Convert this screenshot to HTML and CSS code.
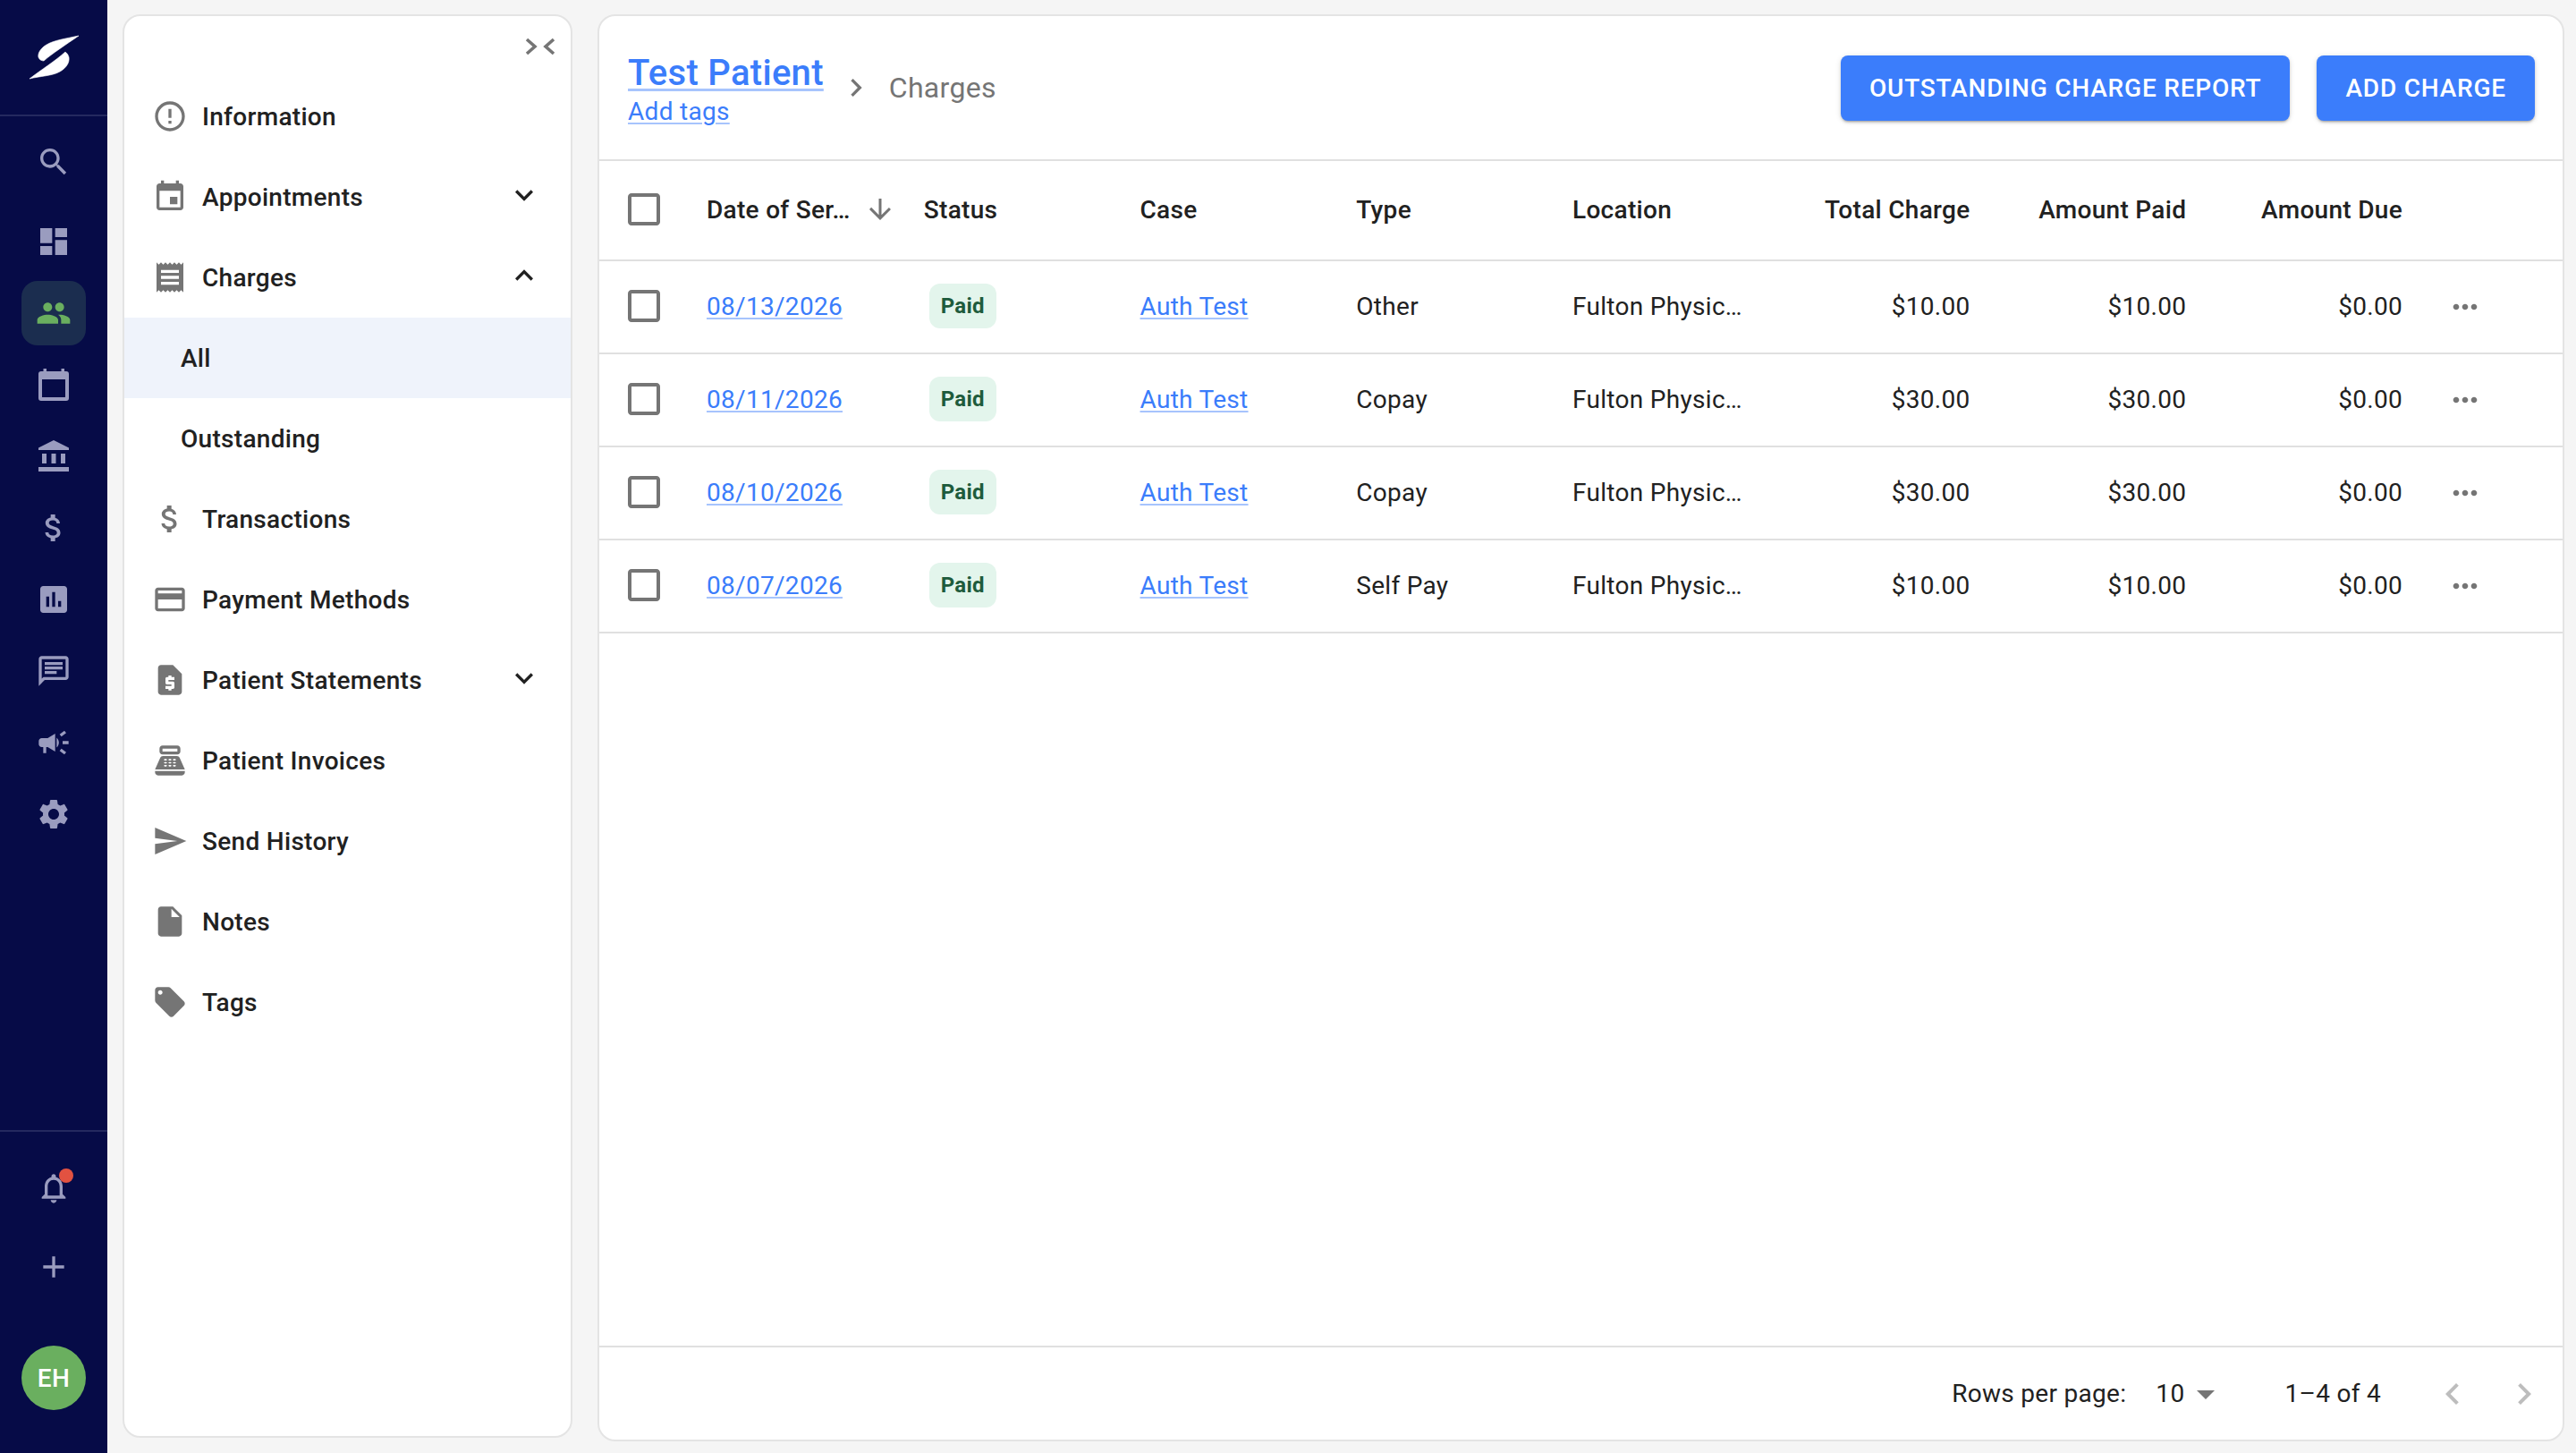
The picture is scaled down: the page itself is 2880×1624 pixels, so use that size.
FILE: index.html
```html
<!DOCTYPE html>
<html lang="en">
<head>
<meta charset="utf-8">
<title>Charges</title>
<link rel="stylesheet" href="styles.css">
</head>
<body>
<svg class="defs" aria-hidden="true">
  <symbol id="i-checkbox" viewBox="0 0 24 24"><path d="M19 5v14H5V5h14m0-2H5c-1.1 0-2 .9-2 2v14c0 1.1.9 2 2 2h14c1.1 0 2-.9 2-2V5c0-1.1-.9-2-2-2z"/></symbol>
  <symbol id="i-more" viewBox="0 0 24 24"><path d="M6 10c-1.1 0-2 .9-2 2s.9 2 2 2 2-.9 2-2-.9-2-2-2zm12 0c-1.1 0-2 .9-2 2s.9 2 2 2 2-.9 2-2-.9-2-2-2zm-6 0c-1.1 0-2 .9-2 2s.9 2 2 2 2-.9 2-2-.9-2-2-2z"/></symbol>
  <symbol id="i-expand" viewBox="0 0 24 24"><path d="M16.59 8.59L12 13.17 7.41 8.59 6 10l6 6 6-6z"/></symbol>
  <symbol id="i-less" viewBox="0 0 24 24"><path d="M12 8l-6 6 1.41 1.41L12 10.83l4.59 4.58L18 14z"/></symbol>
  <symbol id="i-right" viewBox="0 0 24 24"><path d="M10 6L8.59 7.41 13.17 12l-4.58 4.59L10 18l6-6z"/></symbol>
  <symbol id="i-left" viewBox="0 0 24 24"><path d="M15.41 7.41L14 6l-6 6 6 6 1.41-1.41L10.83 12z"/></symbol>
</svg>

<aside class="rail">
  <div class="rail-logo">
    <svg class="logo" viewBox="30 36 60 54"><path d="M88 40C74 43 60 45 52 50C45 54 42 60 43 64C44 67 47 68 49 68C58 60 75 49 88 40Z"/><path d="M33 88C45 85 58 85 67 80C74 76 78 70 77 64C76 60 74 59 73 58C62 68 46 78 33 88Z"/></svg>
  </div>
  <nav class="rail-nav">
    <a class="rail-item search"><svg class="icon40" viewBox="0 0 24 24"><path d="M15.5 14h-.79l-.28-.27C15.41 12.59 16 11.11 16 9.5 16 5.91 13.09 3 9.5 3S3 5.91 3 9.5 5.91 16 9.5 16c1.61 0 3.09-.59 4.23-1.57l.27.28v.79l5 4.99L20.49 19l-4.99-5zm-6 0C7.01 14 5 11.99 5 9.5S7.01 5 9.5 5 14 7.01 14 9.5 11.99 14 9.5 14z"/></svg></a>
    <a class="rail-item"><svg class="icon40" viewBox="0 0 24 24"><path d="M3 13h8V3H3v10zm0 8h8v-6H3v6zm10 0h8V11h-8v10zm0-18v6h8V3h-8z"/></svg></a>
    <a class="rail-item active"><span class="rail-active"><svg class="icon40" viewBox="0 0 24 24"><path d="M16 11c1.66 0 2.99-1.34 2.99-3S17.66 5 16 5c-1.66 0-3 1.34-3 3s1.34 3 3 3zm-8 0c1.66 0 2.99-1.34 2.99-3S9.66 5 8 5C6.34 5 5 6.34 5 8s1.34 3 3 3zm0 2c-2.33 0-7 1.17-7 3.5V19h14v-2.5c0-2.33-4.67-3.5-7-3.5zm8 0c-.29 0-.62.02-.97.05 1.16.84 1.97 1.97 1.97 3.45V19h6v-2.5c0-2.33-4.67-3.5-7-3.5z"/></svg></span></a>
    <a class="rail-item"><svg class="icon40" viewBox="0 0 40 40"><path fill-rule="evenodd" d="M6 5h2.500V2H12V5H28.500V2H32V5H34a3 3 0 0 1 3 3V35a3 3 0 0 1-3 3H6a3 3 0 0 1-3-3V8a3 3 0 0 1 3-3zM7 14V34H33V14z"/></svg></a>
    <a class="rail-item"><svg class="icon40" viewBox="0 0 40 40"><path d="M20 2L37 10.500V13H3V10.500zM7 17h5V28H7zM17.500 17h5V28h-5zM28 17h5V28h-5zM3 32H37v5H3z"/></svg></a>
    <a class="rail-item"><svg class="icon40" viewBox="0 0 24 24"><path d="M11.8 10.9c-2.27-.59-3-1.2-3-2.15 0-1.09 1.01-1.85 2.7-1.85 1.78 0 2.44.85 2.5 2.1h2.21c-.07-1.72-1.12-3.3-3.21-3.81V3h-3v2.16c-1.94.42-3.5 1.68-3.5 3.61 0 2.31 1.91 3.46 4.7 4.13 2.5.6 3 1.48 3 2.41 0 .69-.49 1.79-2.7 1.79-2.06 0-2.87-.92-2.98-2.1h-2.2c.12 2.19 1.76 3.42 3.68 3.83V21h3v-2.15c1.95-.37 3.5-1.5 3.5-3.55 0-2.84-2.43-3.81-4.7-4.4z"/></svg></a>
    <a class="rail-item"><svg class="icon40" viewBox="0 0 24 24"><path d="M19 3H5c-1.1 0-2 .9-2 2v14c0 1.1.9 2 2 2h14c1.1 0 2-.9 2-2V5c0-1.1-.9-2-2-2zM9 17H7v-7h2v7zm4 0h-2V7h2v10zm4 0h-2v-4h2v4z"/></svg></a>
    <a class="rail-item"><svg class="icon40" viewBox="0 0 24 24"><path d="M20 2H4c-1.1 0-1.99.9-1.99 2L2 22l4-4h14c1.1 0 2-.9 2-2V4c0-1.1-.9-2-2-2zm0 14H5.17L4 17.17V4h16v12zM6 12h8v2H6zm0-3h12v2H6zm0-3h12v2H6z"/></svg></a>
    <a class="rail-item"><svg class="icon40" viewBox="0 0 24 24"><path d="M18 11v2h4v-2h-4zm-2 6.61c.96.71 2.21 1.65 3.2 2.39.4-.53.8-1.07 1.2-1.6-.99-.74-2.24-1.68-3.2-2.4-.4.54-.8 1.08-1.2 1.61zM20.4 5.6c-.4-.53-.8-1.07-1.2-1.6-.99.74-2.24 1.68-3.2 2.4.4.53.8 1.07 1.2 1.6.96-.72 2.21-1.65 3.2-2.4zM4 9c-1.1 0-2 .9-2 2v2c0 1.1.9 2 2 2h1v4h2v-4h1l5 3V6L8 9H4zm11.5 3c0-1.33-.58-2.53-1.5-3.35v6.69c.92-.81 1.5-2.01 1.5-3.34z"/></svg></a>
    <a class="rail-item"><svg class="icon40" viewBox="0 0 24 24"><path d="M19.14 12.94c.04-.3.06-.61.06-.94 0-.32-.02-.64-.07-.94l2.03-1.58c.18-.14.23-.41.12-.61l-1.92-3.32c-.12-.22-.37-.29-.59-.22l-2.39.96c-.5-.38-1.03-.7-1.62-.94l-.36-2.54c-.04-.24-.24-.41-.48-.41h-3.84c-.24 0-.43.17-.47.41l-.36 2.54c-.59.24-1.13.57-1.62.94l-2.39-.96c-.22-.08-.47 0-.59.22L2.74 8.87c-.12.21-.08.47.12.61l2.03 1.58c-.05.3-.09.63-.09.94s.02.64.07.94l-2.03 1.58c-.18.14-.23.41-.12.61l1.92 3.32c.12.22.37.29.59.22l2.39-.96c.5.38 1.03.7 1.62.94l.36 2.54c.05.24.24.41.48.41h3.84c.24 0 .44-.17.47-.41l.36-2.54c.59-.24 1.13-.56 1.62-.94l2.39.96c.22.08.47 0 .59-.22l1.92-3.32c.12-.22.07-.47-.12-.61l-2.01-1.58zM12 15.6c-1.98 0-3.6-1.62-3.6-3.6s1.62-3.6 3.6-3.6 3.6 1.62 3.6 3.6-1.62 3.6-3.6 3.6z"/></svg></a>
  </nav>
  <div class="rail-foot">
    <a class="rail-foot-item bell"><svg class="icon40" viewBox="0 0 24 24"><path d="M12 22c1.1 0 2-.9 2-2h-4c0 1.1.9 2 2 2zm6-6v-5c0-3.07-1.63-5.64-4.5-6.32V4c0-.83-.67-1.5-1.5-1.5s-1.5.67-1.5 1.5v.68C7.64 5.36 6 7.92 6 11v5l-2 2v1h16v-1l-2-2zm-2 1H8v-6c0-2.48 1.51-4.5 4-4.5s4 2.02 4 4.5v6z"/></svg><span class="dot"></span></a>
    <a class="rail-foot-item"><svg class="icon40" viewBox="0 0 24 24"><path d="M19 13h-6v6h-2v-6H5v-2h6V5h2v6h6v2z"/></svg></a>
    <div class="avatar">EH</div>
  </div>
</aside>

<aside class="panel">
  <div class="panel-top">
    <svg class="collapse" viewBox="0 0 36 24"><polyline points="3,4 12,12 3,20"/><polyline points="33,4 24,12 33,20"/></svg>
  </div>
  <a class="pitem"><svg class="icon40 gray" viewBox="0 0 24 24"><path d="M11 15h2v2h-2zm0-8h2v6h-2zm.99-5C6.47 2 2 6.48 2 12s4.47 10 9.99 10C17.52 22 22 17.52 22 12S17.52 2 11.99 2zM12 20c-4.42 0-8-3.58-8-8s3.58-8 8-8 8 3.58 8 8-3.58 8-8 8z"/></svg><span class="plabel">Information</span></a>
  <a class="pitem"><svg class="icon40 gray" viewBox="0 0 24 24"><path d="M17 12h-5v5h5v-5zM16 1v2H8V1H6v2H5c-1.11 0-1.99.9-1.99 2L3 19c0 1.1.89 2 2 2h14c1.1 0 2-.9 2-2V5c0-1.1-.9-2-2-2h-1V1h-2zm3 18H5V8h14v11z"/></svg><span class="plabel">Appointments</span><svg class="caret"><use href="#i-expand"/></svg></a>
  <a class="pitem"><svg class="icon40 gray" viewBox="0 0 24 24"><path d="M18 17H6v-2h12v2zm0-4H6v-2h12v2zm0-4H6V7h12v2zM3 22l1.5-1.5L6 22l1.5-1.5L9 22l1.5-1.5L12 22l1.5-1.5L15 22l1.5-1.5L18 22l1.5-1.5L21 22V2l-1.5 1.5L18 2l-1.5 1.5L15 2l-1.5 1.5L12 2l-1.5 1.5L9 2 7.5 3.5 6 2 4.5 3.5 3 2v20z"/></svg><span class="plabel">Charges</span><svg class="caret"><use href="#i-less"/></svg></a>
  <a class="pitem sub selected"><span class="plabel">All</span></a>
  <a class="pitem sub"><span class="plabel">Outstanding</span></a>
  <a class="pitem"><svg class="icon40 gray" viewBox="0 0 24 24"><path d="M11.8 10.9c-2.27-.59-3-1.2-3-2.15 0-1.09 1.01-1.85 2.7-1.85 1.78 0 2.44.85 2.5 2.1h2.21c-.07-1.72-1.12-3.3-3.21-3.81V3h-3v2.16c-1.94.42-3.5 1.68-3.5 3.61 0 2.31 1.91 3.46 4.7 4.13 2.5.6 3 1.48 3 2.41 0 .69-.49 1.79-2.7 1.79-2.06 0-2.87-.92-2.98-2.1h-2.2c.12 2.19 1.76 3.42 3.68 3.83V21h3v-2.15c1.95-.37 3.5-1.5 3.5-3.55 0-2.84-2.43-3.81-4.7-4.4z"/></svg><span class="plabel">Transactions</span></a>
  <a class="pitem"><svg class="icon40 gray" viewBox="0 0 24 24"><path d="M20 4H4c-1.11 0-1.99.89-1.99 2L2 18c0 1.11.89 2 2 2h16c1.11 0 2-.89 2-2V6c0-1.11-.89-2-2-2zm0 14H4v-6h16v6zm0-10H4V6h16v2z"/></svg><span class="plabel">Payment Methods</span></a>
  <a class="pitem"><svg class="icon40 gray" viewBox="0 0 24 24"><path d="M14 2H6c-1.1 0-1.99.9-1.99 2L4 20c0 1.1.89 2 1.99 2H18c1.1 0 2-.9 2-2V8l-6-6zm1 10h-4v1h3c.55 0 1 .45 1 1v3c0 .55-.45 1-1 1h-1v1h-2v-1H9v-2h4v-1h-3c-.55 0-1-.45-1-1v-3c0-.55.45-1 1-1h1V9h2v1h2v2z"/></svg><span class="plabel">Patient Statements</span><svg class="caret"><use href="#i-expand"/></svg></a>
  <a class="pitem"><svg class="icon40 gray" viewBox="0 0 24 24"><path d="M17 2H7c-1.1 0-2 .9-2 2v2c0 1.1.9 2 2 2h10c1.1 0 2-.9 2-2V4c0-1.1-.9-2-2-2zm0 4H7V4h10v2zm3 16H4c-1.1 0-2-.9-2-2v-1h20v1c0 1.1-.9 2-2 2zm-1.47-11.81C18.21 9.47 17.49 9 16.7 9H7.3c-.79 0-1.51.47-1.83 1.19L2 18h20l-3.47-7.81zM9.5 16h-1c-.28 0-.5-.22-.5-.5s.22-.5.5-.5h1c.28 0 .5.22.5.5s-.22.5-.5.5zm0-2h-1c-.28 0-.5-.22-.5-.5s.22-.5.5-.5h1c.28 0 .5.22.5.5s-.22.5-.5.5zm0-2h-1c-.28 0-.5-.22-.5-.5s.22-.5.5-.5h1c.28 0 .5.22.5.5s-.22.5-.5.5zm3 4h-1c-.28 0-.5-.22-.5-.5s.22-.5.5-.5h1c.28 0 .5.22.5.5s-.22.5-.5.5zm0-2h-1c-.28 0-.5-.22-.5-.5s.22-.5.5-.5h1c.28 0 .5.22.5.5s-.22.5-.5.5zm0-2h-1c-.28 0-.5-.22-.5-.5s.22-.5.5-.5h1c.28 0 .5.22.5.5s-.22.5-.5.5zm3 4h-1c-.28 0-.5-.22-.5-.5s.22-.5.5-.5h1c.28 0 .5.22.5.5s-.22.5-.5.5zm0-2h-1c-.28 0-.5-.22-.5-.5s.22-.5.5-.5h1c.28 0 .5.22.5.5s-.22.5-.5.5zm0-2h-1c-.28 0-.5-.22-.5-.5s.22-.5.5-.5h1c.28 0 .5.22.5.5s-.22.5-.5.5z"/></svg><span class="plabel">Patient Invoices</span></a>
  <a class="pitem"><svg class="icon40 gray" viewBox="0 0 24 24"><path d="M2.01 21L23 12 2.01 3 2 10l15 2-15 2z"/></svg><span class="plabel">Send History</span></a>
  <a class="pitem"><svg class="icon40 gray" viewBox="0 0 24 24"><path d="M6 2c-1.1 0-1.99.9-1.99 2L4 20c0 1.1.89 2 1.99 2H18c1.1 0 2-.9 2-2V8l-6-6H6zm7 7V3.5L18.5 9H13z"/></svg><span class="plabel">Notes</span></a>
  <a class="pitem"><svg class="icon40 gray" viewBox="0 0 24 24"><path d="M21.41 11.58l-9-9C12.05 2.22 11.55 2 11 2H4c-1.1 0-2 .9-2 2v7c0 .55.22 1.05.59 1.42l9 9c.36.36.86.58 1.41.58.55 0 1.05-.22 1.41-.59l7-7c.37-.36.59-.86.59-1.41 0-.55-.23-1.06-.59-1.42zM5.5 7C4.67 7 4 6.33 4 5.5S4.67 4 5.5 4 7 4.67 7 5.5 6.33 7 5.5 7z"/></svg><span class="plabel">Tags</span></a>
</aside>

<main class="main">
  <header class="main-head">
    <div class="title-block">
      <a class="title">Test Patient</a>
      <a class="add-tags">Add tags</a>
    </div>
    <svg class="crumb-sep"><use href="#i-right"/></svg>
    <span class="crumb">Charges</span>
    <div class="actions">
      <button class="btn">OUTSTANDING CHARGE REPORT</button>
      <button class="btn">ADD CHARGE</button>
    </div>
  </header>

  <div class="row head-row">
    <div class="cell check"><svg class="checkbox"><use href="#i-checkbox"/></svg></div>
    <div class="cell sort"><span class="sort-label">Date of Ser…</span><svg class="sort-icon" viewBox="0 0 24 24"><path d="M20 12l-1.41-1.41L13 16.17V4h-2v12.17l-5.58-5.59L4 12l8 8 8-8z"/></svg></div>
    <div class="cell">Status</div>
    <div class="cell">Case</div>
    <div class="cell">Type</div>
    <div class="cell">Location</div>
    <div class="cell num">Total Charge</div>
    <div class="cell num">Amount Paid</div>
    <div class="cell num">Amount Due</div>
    <div class="cell"></div>
  </div>

  <div class="row">
    <div class="cell check"><svg class="checkbox"><use href="#i-checkbox"/></svg></div>
    <div class="cell"><a class="link">08/13/2026</a></div>
    <div class="cell"><span class="chip">Paid</span></div>
    <div class="cell"><a class="link">Auth Test</a></div>
    <div class="cell">Other</div>
    <div class="cell">Fulton Physic…</div>
    <div class="cell num">$10.00</div>
    <div class="cell num">$10.00</div>
    <div class="cell num">$0.00</div>
    <div class="cell"><svg class="more"><use href="#i-more"/></svg></div>
  </div>
  <div class="row">
    <div class="cell check"><svg class="checkbox"><use href="#i-checkbox"/></svg></div>
    <div class="cell"><a class="link">08/11/2026</a></div>
    <div class="cell"><span class="chip">Paid</span></div>
    <div class="cell"><a class="link">Auth Test</a></div>
    <div class="cell">Copay</div>
    <div class="cell">Fulton Physic…</div>
    <div class="cell num">$30.00</div>
    <div class="cell num">$30.00</div>
    <div class="cell num">$0.00</div>
    <div class="cell"><svg class="more"><use href="#i-more"/></svg></div>
  </div>
  <div class="row">
    <div class="cell check"><svg class="checkbox"><use href="#i-checkbox"/></svg></div>
    <div class="cell"><a class="link">08/10/2026</a></div>
    <div class="cell"><span class="chip">Paid</span></div>
    <div class="cell"><a class="link">Auth Test</a></div>
    <div class="cell">Copay</div>
    <div class="cell">Fulton Physic…</div>
    <div class="cell num">$30.00</div>
    <div class="cell num">$30.00</div>
    <div class="cell num">$0.00</div>
    <div class="cell"><svg class="more"><use href="#i-more"/></svg></div>
  </div>
  <div class="row">
    <div class="cell check"><svg class="checkbox"><use href="#i-checkbox"/></svg></div>
    <div class="cell"><a class="link">08/07/2026</a></div>
    <div class="cell"><span class="chip">Paid</span></div>
    <div class="cell"><a class="link">Auth Test</a></div>
    <div class="cell">Self Pay</div>
    <div class="cell">Fulton Physic…</div>
    <div class="cell num">$10.00</div>
    <div class="cell num">$10.00</div>
    <div class="cell num">$0.00</div>
    <div class="cell"><svg class="more"><use href="#i-more"/></svg></div>
  </div>

  <div class="spacer"></div>

  <footer class="pager">
    <span>Rows per page:</span>
    <span class="page-size">10</span>
    <svg class="page-caret" viewBox="0 0 24 24"><path d="M7 10l5 5 5-5z"/></svg>
    <span class="page-range">1–4 of 4</span>
    <svg class="page-nav first"><use href="#i-left"/></svg>
    <svg class="page-nav"><use href="#i-right"/></svg>
  </footer>
</main>
</body>
</html>
```

FILE: styles.css
```css
* { box-sizing: border-box; }
html, body { margin: 0; height: 100%; }
body {
  display: flex;
  height: 1624px;
  overflow: hidden;
  background: #f5f5f5;
  font-family: Roboto, "Liberation Sans", sans-serif;
  font-size: 28px;
  letter-spacing: .3px;
  color: #212121;
}
.defs { display: none; }
svg { display: block; flex: none; fill: currentColor; }
.icon40 { width: 40px; height: 40px; }
.gray { color: #757575; }

/* left rail */
.rail {
  flex: none;
  width: 120px;
  background: #060b47;
  color: #9a9cbf;
  display: flex;
  flex-direction: column;
}
.rail-logo {
  height: 130px;
  border-bottom: 2px solid #24295f;
  display: flex;
  justify-content: center;
  padding-top: 36px;
}
.logo { width: 60px; height: 54px; fill: #fff; stroke: #fff; stroke-width: .6; }
.rail-nav { flex: 1; padding-top: 11px; }
.rail-item {
  height: 80px;
  display: flex;
  align-items: center;
  justify-content: center;
}
.rail-item.search { margin-bottom: 9px; }
.rail-active {
  width: 72px;
  height: 72px;
  border-radius: 18px;
  background: #1b2d4f;
  color: #6aaf5f;
  display: flex;
  align-items: center;
  justify-content: center;
}
.rail-foot {
  border-top: 2px solid #24295f;
  padding-top: 19px;
  display: flex;
  flex-direction: column;
  align-items: center;
  height: 361px;
}
.rail-foot-item {
  position: relative;
  height: 88px;
  width: 72px;
  display: flex;
  align-items: center;
  justify-content: center;
}
.dot {
  position: absolute;
  left: 42px;
  top: 22px;
  width: 16px;
  height: 16px;
  border-radius: 50%;
  background: #e25241;
}
.avatar {
  margin-top: 44px;
  width: 72px;
  height: 72px;
  border-radius: 50%;
  background: #6aaf5f;
  color: #fff;
  font-weight: 500;
  display: flex;
  align-items: center;
  justify-content: center;
}

/* secondary panel */
.panel {
  flex: none;
  width: 503px;
  margin: 16px 0 17px 17px;
  background: #fff;
  border: 2px solid #e4e4e4;
  border-radius: 20px;
  overflow: hidden;
}
.panel-top {
  height: 67px;
  display: flex;
  justify-content: flex-end;
  padding: 22px 16px 0 0;
}
.collapse { width: 36px; height: 24px; fill: none; stroke: #757575; stroke-width: 3.6; }
.pitem {
  height: 90px;
  display: flex;
  align-items: center;
  gap: 16px;
  padding: 0 32px 0 31px;
  font-weight: 500;
}
.pitem.sub { padding-left: 63px; }
.pitem.selected { background: #eff3fb; }
.plabel { flex: 1; }
.caret { width: 40px; height: 40px; margin-bottom: 5px; color: #212121; }

/* main card */
.main {
  flex: 1;
  min-width: 0;
  margin: 16px 13px 13px 28px;
  background: #fff;
  border: 2px solid #e4e4e4;
  border-radius: 20px;
  display: flex;
  flex-direction: column;
  overflow: hidden;
}
.main-head {
  flex: none;
  height: 162px;
  border-bottom: 2px solid #e0e0e0;
  display: flex;
  align-items: center;
  padding: 0 31px 0 32px;
}
.title-block { display: flex; flex-direction: column; align-items: flex-start; padding-top: 3px; }
.title {
  font-size: 40px;
  font-weight: 500;
  line-height: 50px;
  color: #3b7dfb;
  text-decoration: underline 3px rgba(59, 125, 251, .45);
  text-underline-offset: 4px;
}
.add-tags {
  line-height: 35px;
  color: #3b7dfb;
  text-decoration: underline 2px rgba(59, 125, 251, .45);
  text-underline-offset: 3px;
}
.crumb-sep { width: 40px; height: 40px; margin: 0 17px 0 16px; color: #757575; }
.crumb { font-size: 32px; color: #757575; }
.actions { margin-left: auto; display: flex; gap: 30px; }
.btn {
  height: 73px;
  padding: 0 32px;
  border: 0;
  border-radius: 8px;
  background: #3b7dfb;
  color: #fff;
  font: 500 28px Roboto, sans-serif;
  letter-spacing: .8px;
  box-shadow: 0 3px 2px -2px rgba(0,0,0,.2), 0 2px 3px rgba(0,0,0,.14), 0 1px 6px rgba(0,0,0,.12);
}

/* table */
.row {
  flex: none;
  height: 104px;
  display: grid;
  grid-template-columns: 120px 242.75px repeat(7, 241.75px) 1fr;
  align-items: center;
  border-bottom: 2px solid #e0e0e0;
  padding-bottom: 2px;
}
.head-row { height: 112px; font-weight: 500; }
.cell { min-width: 0; white-space: nowrap; }
.check { padding-left: 26px; }
.checkbox { width: 48px; height: 48px; color: #757575; }
.sort { display: flex; align-items: center; }
.sort-label { width: 166px; }
.sort-icon { width: 36px; height: 36px; margin-left: 10px; color: #757575; }
.num { text-align: right; padding-right: 39px; }
.link {
  color: #3b7dfb;
  text-decoration: underline 2px rgba(59, 125, 251, .45);
  text-underline-offset: 3px;
}
.chip {
  display: inline-flex;
  align-items: center;
  justify-content: center;
  margin-left: 6px;
  width: 75px;
  height: 50px;
  border-radius: 12px;
  background: #e3f5ec;
  color: #1e5b3c;
  font-size: 24px;
  font-weight: 700;
}
.more { width: 40px; height: 40px; margin: 1px 0 0 11px; color: #757575; }
.spacer { flex: 1; }

/* pagination */
.pager {
  flex: none;
  height: 105px;
  border-top: 2px solid #e0e0e0;
  display: flex;
  align-items: center;
  justify-content: flex-end;
  padding-right: 19px;
}
.page-size { margin-left: 33px; }
.page-caret { width: 48px; height: 48px; color: #757575; }
.page-range { margin-left: 64px; }
.page-nav { width: 48px; height: 48px; margin-left: 32px; color: #bdbdbd; }
.page-nav.first { margin-left: 56px; }
```
